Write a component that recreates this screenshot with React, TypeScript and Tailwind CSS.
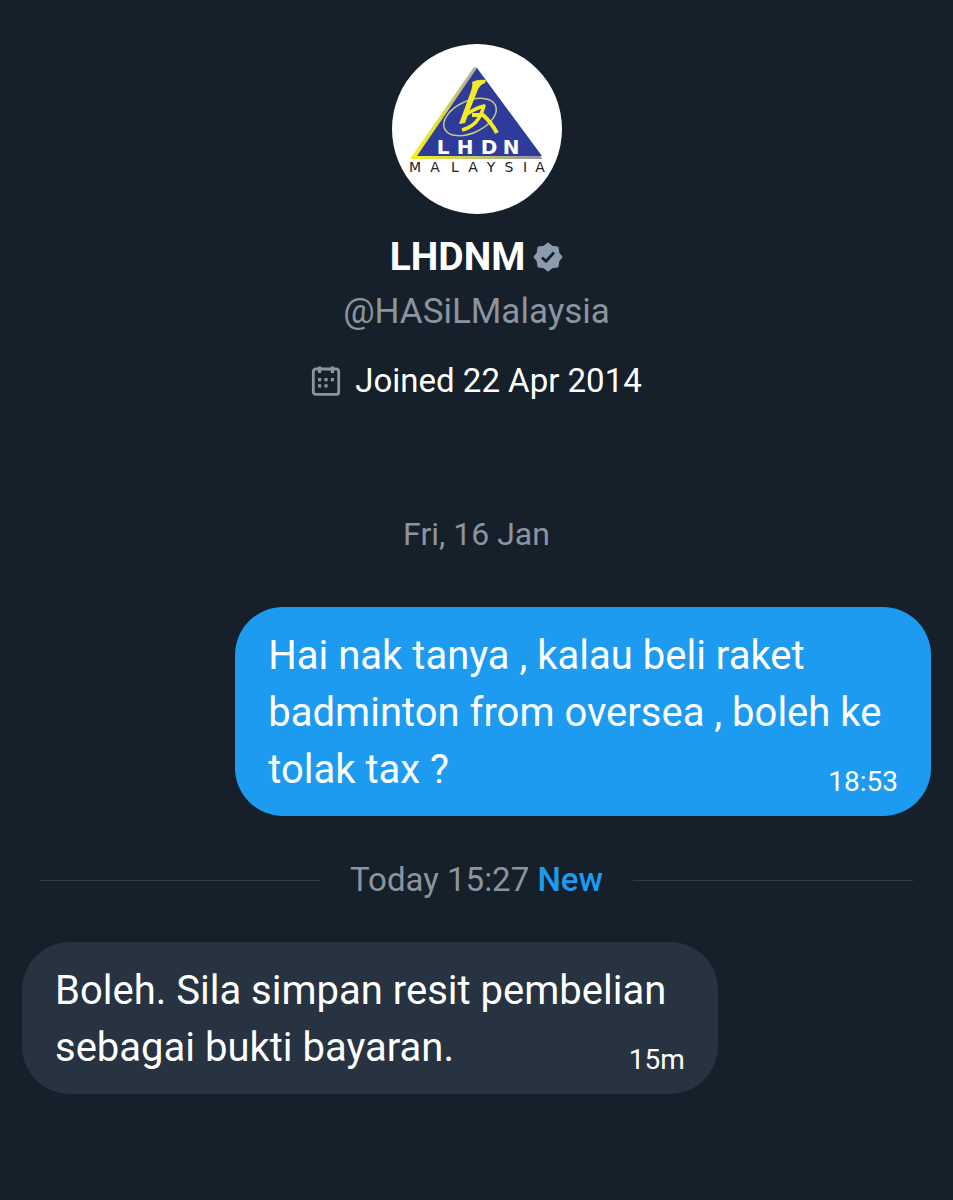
const LETTERS = [
  { char: "M", x: 23 },
  { char: "A", x: 43 },
  { char: "L", x: 63 },
  { char: "A", x: 81 },
  { char: "Y", x: 99 },
  { char: "S", x: 117 },
  { char: "I", x: 133 },
  { char: "A", x: 148 },
];

function Avatar() {
  return (
    <svg
      className="size-[170px] rounded-full bg-white"
      viewBox="0 0 170 170"
      role="img"
      aria-label="LHDN Malaysia"
    >
      <defs>
        <linearGradient id="edge" x1="0" y1="1" x2="0.6" y2="0">
          <stop offset="0" stopColor="#f6f01e" />
          <stop offset="0.5" stopColor="#e0dd45" />
          <stop offset="1" stopColor="#b4b294" />
        </linearGradient>
        <linearGradient id="base" x1="0" x2="1">
          <stop offset="0" stopColor="#f6f01e" />
          <stop offset="0.5" stopColor="#c9c66a" />
          <stop offset="1" stopColor="#8d8da6" />
        </linearGradient>
      </defs>
      <path d="M82 23 L86 24 L28 112 L18 115 Z" fill="url(#edge)" />
      <path d="M18 115 L25 111 L148 111 L150 115 Z" fill="url(#base)" />
      <path d="M85 24 L150 112 L25 112 Z" fill="#2e3b9b" />
      <ellipse
        cx="78"
        cy="73"
        rx="28"
        ry="16"
        transform="rotate(-25 78 73)"
        fill="none"
        stroke="#c5cb7c"
        strokeWidth="1.5"
      />
      <path
        d="M80 38 Q86 35 94 36 L93 39 Q87 41 85 48 L77 68 L73 79 L67 80 L79 47 Q81 41 80 38 Z"
        fill="#f5ea28"
      />
      <g fill="none" stroke="#f5ea28" strokeLinejoin="round">
        <path d="M75 70 Q84 64 92 62 Q89 72 84 78 Q78 84 70 86" strokeWidth="3.5" />
        <path d="M80 71 L91 71 Q99 78 105 89" strokeWidth="4" />
      </g>
      <g fill="#fff" fontFamily="'DejaVu Sans', sans-serif" fontWeight="700" fontSize="20" textAnchor="middle">
        <text x="51" y="110">L</text>
        <text x="73" y="110">H</text>
        <text x="97" y="110">D</text>
        <text x="119" y="110">N</text>
      </g>
      <g fill="#222" fontFamily="'DejaVu Sans', sans-serif" fontSize="14" textAnchor="middle">
        {LETTERS.map((letter) => (
          <text key={letter.x} x={letter.x} y="128">
            {letter.char}
          </text>
        ))}
      </g>
    </svg>
  );
}

function VerifiedBadge() {
  return (
    <svg className="size-[30px]" viewBox="0 0 30 30" role="img" aria-label="Verified">
      <path
        d="M15 1.5 L19 4.7 L24.5 5.5 L25.3 11 L28.5 15 L25.3 19 L24.5 24.5 L19 25.3 L15 28.5 L11 25.3 L5.5 24.5 L4.7 19 L1.5 15 L4.7 11 L5.5 5.5 L11 4.7 Z"
        fill="#8b9bae"
        stroke="#8b9bae"
        strokeWidth="2"
        strokeLinejoin="round"
      />
      <path d="M9 15.5 L13 19.3 L21 10.5" fill="none" stroke="#16202a" strokeWidth="2.8" />
    </svg>
  );
}

function CalendarIcon() {
  return (
    <svg className="size-[30px]" viewBox="0 0 30 30" fill="#8b949f" aria-hidden="true">
      <rect x="2.3" y="3" width="25.4" height="25.4" rx="2.5" fill="none" stroke="#8b949f" strokeWidth="2.8" />
      <path d="M7 0.5h3.2v6.500h-3.2zM19.8 0.5h3.2v6.500h-3.2z" />
      <path d="M7 12h3.2v3.2h-3.2zM13.4 12h3.2v3.2h-3.2zM19.8 12h3.2v3.2h-3.2zM7 18.3h3.2v3.2h-3.2zM13.4 18.3h3.2v3.2h-3.2z" />
    </svg>
  );
}

export default function App() {
  return (
    <main className="min-h-screen bg-[#16202a] px-[22px] pt-11 font-[Roboto,sans-serif] text-white">
      <header className="flex flex-col items-center">
        <Avatar />
        <div className="mt-5 flex items-center gap-2">
          <h1 className="text-[39px] leading-[46px] font-bold">LHDNM</h1>
          <VerifiedBadge />
        </div>
        <a href="#profile" className="mt-[9px] text-[35px] leading-[46px] text-[#8b949f]">
          @HASiLMalaysia
        </a>
        <div className="mt-6 flex items-center gap-3.5">
          <CalendarIcon />
          <p className="text-[33px] leading-[44px]">Joined 22 Apr 2014</p>
        </div>
      </header>

      <p className="mt-[109px] text-center text-[32px] leading-[44px] text-[#8b949f]">
        Fri, 16 Jan
      </p>

      <div className="mt-[51px] ml-auto w-[73vw] rounded-[48px] bg-[#1d9bf0] px-[33px] pt-5 pb-[18px]">
        <p className="text-[40px] leading-[57px]">
          Hai nak tanya , kalau beli raket badminton from oversea , boleh ke tolak tax ?
          <time className="float-right mt-[21px] -mb-1 text-[28px] leading-[40px]">18:53</time>
        </p>
      </div>

      <div className="mx-[18px] mt-[42px] flex items-center gap-[30px]">
        <hr className="flex-1 border-[#2f3b46]" />
        <p className="text-[33px] leading-[44px] text-[#8b949f]">
          Today 15:27 <span className="font-medium text-[#1d9bf0]">New</span>
        </p>
        <hr className="flex-1 border-[#2f3b46]" />
      </div>

      <div className="mt-10 w-[73vw] rounded-[48px] bg-[#273340] px-[33px] pt-5 pb-[18px]">
        <p className="text-[40px] leading-[57px]">
          Boleh. Sila simpan resit pembelian sebagai bukti bayaran.
          <time className="float-right mt-[21px] -mb-1 text-[28px] leading-[40px]">15m</time>
        </p>
      </div>
    </main>
  );
}
